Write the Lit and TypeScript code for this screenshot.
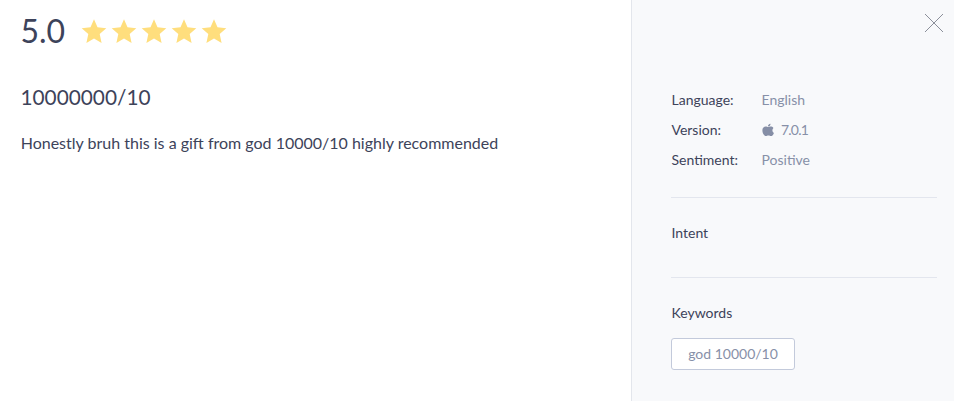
import { LitElement, html, css } from "lit";
import { customElement } from "lit/decorators.js";

@customElement("app-root")
export class AppRoot extends LitElement {
  static styles = css`
    :host { display: flex; width: 954px; height: 401px; overflow: hidden; background: #fff; color: #3d435a; font-family: Lato, sans-serif; font-size: 14px; }
    * { box-sizing: border-box; }
    .review { width: 631px; padding: 12px 21px; }
    .rating { display: flex; align-items: center; height: 38px; }
    .score { width: 60px; margin-left: -0.5px; margin-right: 0.5px; font-size: 32px; line-height: 38px; }
    .stars { display: flex; gap: 4px; }
    .star { width: 26px; height: 26px; fill: #ffde7d; display: block; }
    .title { margin-top: 32px; margin-left: -0.5px; font-size: 20.8px; line-height: 30px; }
    .body { margin-top: 19px; margin-left: -0.3px; font-size: 16px; line-height: 24px; white-space: nowrap; }
    .side { width: 323px; padding: 13px 17px 0 39px; border-left: 1px solid #e3e6ec; background: #f8f9fb; }
    .top { display: flex; justify-content: flex-end; height: 72px; margin-right: -7px; }
    .close { width: 20px; height: 20px; stroke: #8b8f9a; fill: none; }
    .row { display: flex; height: 30px; padding-left: 0.5px; line-height: 30px; }
    .label { width: 90px; }
    .value { display: flex; align-items: center; color: #8790a8; }
    .version { letter-spacing: -0.8px; }
    .apple { width: 12px; height: 14px; margin: 0 7px 0 0.5px; fill: #858ea6; }
    .section { height: 80px; border-top: 1px solid #e3e6ee; padding-top: 20px; line-height: 30px; }
    .heading { padding-left: 0.5px; }
    .meta { height: 112px; }
    .tag { width: 124px; height: 32px; margin-top: 10px; border: 1px solid #c3cadb; border-radius: 3px; background: #fff; color: #8790a8; text-align: center; line-height: 30px; }
  `;

  private star() {
    return html`<svg class="star" viewBox="0 0 26 26"><path d="M13 1.300L16.500 9.300 25.300 10.200 18.700 16.050 20.600 24.900 13 20.600 5.400 24.900 7.300 16.050.7 10.200 9.500 9.300z"/></svg>`;
  }

  render() {
    return html`
      <main class="review">
        <div class="rating">
          <div class="score">5.0</div>
          <div class="stars">${[1, 2, 3, 4, 5].map(() => this.star())}</div>
        </div>
        <div class="title">10000000/10</div>
        <div class="body">Honestly bruh this is a gift from god 10000/10 highly recommended</div>
      </main>
      <aside class="side">
        <div class="top"><svg class="close" viewBox="0 0 20 20"><path d="M1 1l18 18M19 1L1 19"/></svg></div>
        <div class="meta">
          <div class="row"><span class="label">Language:</span><span class="value">English</span></div>
          <div class="row"><span class="label">Version:</span><span class="value version"><svg class="apple" viewBox="0 0 12 14"><path d="M8.500.8c.2 1.500-1 2.800-2.600 2.800C5.800 2.100 7 .9 8.500.8zM6.200 4.100c.5 0 1.300-.6 2.500-.6 1 0 2.100.5 2.700 1.400-1.500 1.400-1.300 4 .5 5-.5 1.500-1.700 3.200-3 3.200-.9 0-1.300-.5-2.500-.5s-1.600.5-2.500.5C2.200 13.100.4 10.200.4 7.500c0-2.600 1.600-4 3.300-4 1.100 0 1.900.6 2.500.6z"/></svg>7.0.1</span></div>
          <div class="row"><span class="label">Sentiment:</span><span class="value">Positive</span></div>
        </div>
        <section class="section"><div class="heading">Intent</div></section>
        <section class="section"><div class="heading">Keywords</div><div class="tag">god 10000/10</div></section>
      </aside>`;
  }
}
